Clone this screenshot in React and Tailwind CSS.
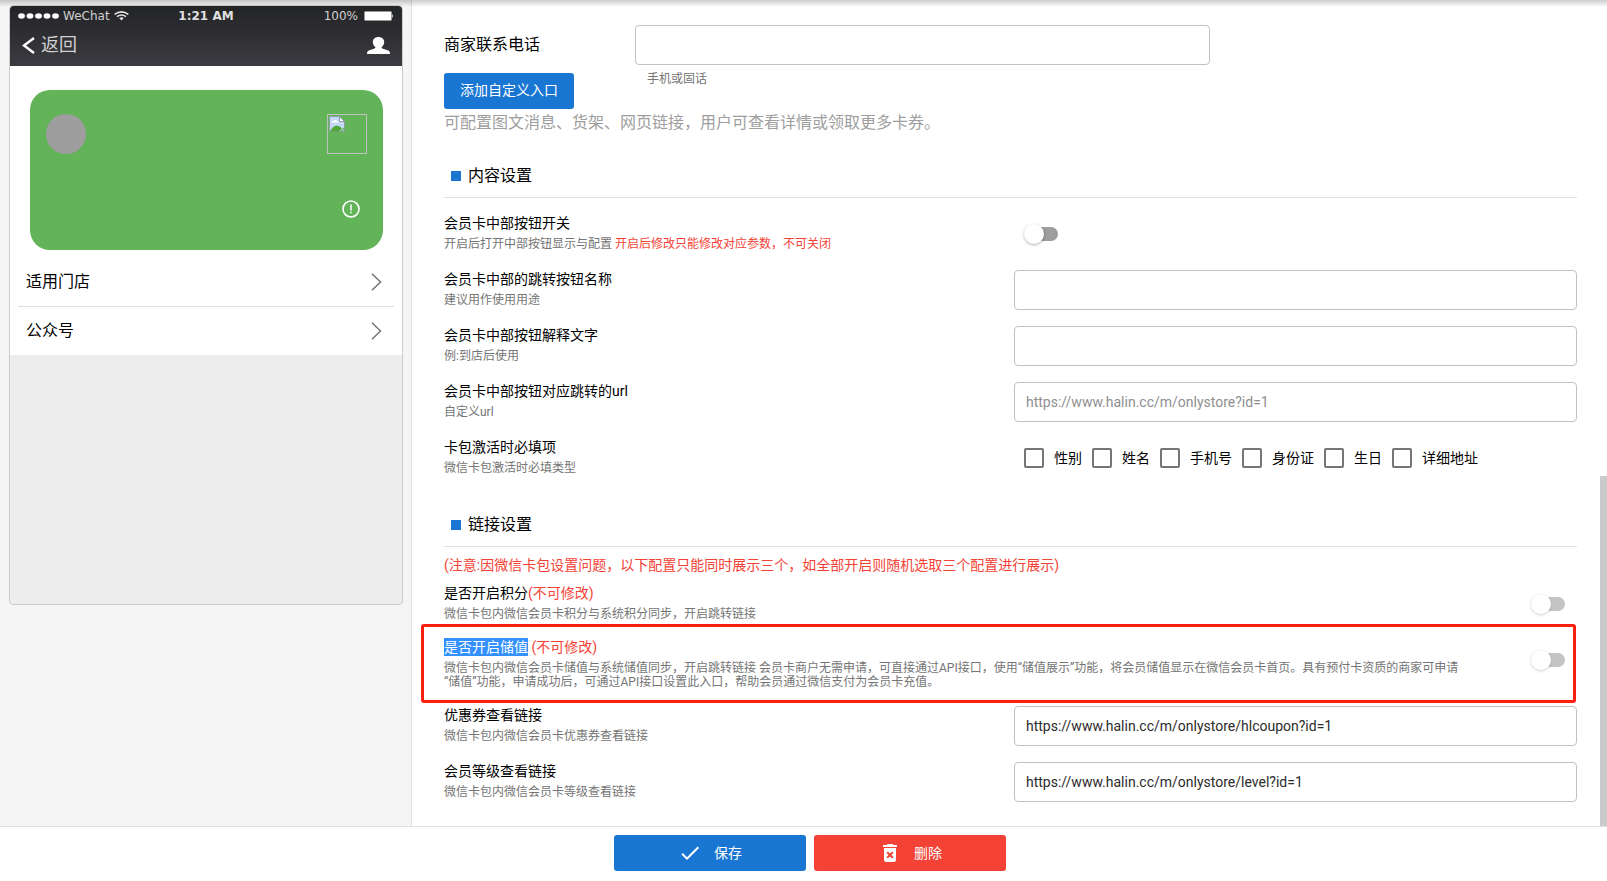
import React from "react";
import { MdCheck, MdDeleteForever } from "react-icons/md";

const inputClass =
  "block h-10 w-full rounded border border-[#c2c2c2] bg-white px-[11px] text-sm text-[#2b2b2b] outline-none placeholder:text-[#8f8f8f]";

function Toggle({ label, disabled }) {
  return (
    <label className={disabled ? "relative block h-5 w-[34px] opacity-60" : "relative block h-5 w-[34px]"}>
      <input type="checkbox" role="switch" aria-label={label} className="peer sr-only" disabled={disabled} />
      <span className="absolute top-[3px] right-0 left-[2px] h-3.5 rounded-full bg-[#9e9e9e]" />
      <span className="absolute top-0 left-0 size-5 rounded-full bg-white shadow-[0_1px_3px_rgba(0,0,0,0.3)]" />
    </label>
  );
}

function SectionTitle({ children }) {
  return (
    <h2 className="flex h-11 items-center gap-[7px] border-b border-[#e0e0e0] pl-[7px] text-base text-black">
      <span className="size-2.5 bg-[#1976d2]" />
      {children}
    </h2>
  );
}

function RowText({ label, htmlFor, children }) {
  const Tag = htmlFor ? "label" : "div";
  return (
    <div>
      <Tag htmlFor={htmlFor} className="block text-sm leading-[18px] text-black">
        {label}
      </Tag>
      <p className="mt-[5px] text-xs leading-3.5 text-[#757575]">{children}</p>
    </div>
  );
}

function FieldRow({ id, label, caption, ...input }) {
  return (
    <div className="grid grid-cols-2 gap-[7px] py-2">
      <RowText label={label} htmlFor={id}>
        {caption}
      </RowText>
      <input id={id} type="text" className={inputClass} {...input} />
    </div>
  );
}

function PhoneHeader() {
  return (
    <header className="h-[60px] rounded-t bg-linear-to-b from-[#232426] to-[#3c3b41] text-white">
      <div className="grid h-5 grid-cols-3 items-center pr-2 pl-2 font-['DejaVu_Sans',sans-serif] text-xs">
        <div className="flex items-center gap-1">
          <svg width="41" height="6" viewBox="0 0 41 6" fill="#fff" aria-hidden="true">
            <ellipse cx="3.5" cy="3" rx="3.4" ry="2.7" />
            <ellipse cx="12" cy="3" rx="3.4" ry="2.7" />
            <ellipse cx="20.5" cy="3" rx="3.4" ry="2.7" />
            <ellipse cx="29" cy="3" rx="3.4" ry="2.7" />
            <ellipse cx="37.5" cy="3" rx="3.4" ry="2.7" />
          </svg>
          <span className="text-[#d0d0d0]">WeChat</span>
          <svg width="15" height="10" viewBox="0 0 15 10" fill="none" stroke="#e6e6e6" strokeWidth="1.6" aria-hidden="true">
            <path d="M0.6 3.3Q7.5-1.6 14.4 3.3" />
            <path d="M3 5.7Q7.5 2.4 12 5.7" />
            <path d="M5.2 7L7.5 9.5L9.8 7Q7.5 5.6 5.2 7Z" fill="#e6e6e6" stroke="none" />
          </svg>
        </div>
        <div className="text-center font-bold text-[#e0e0e0]">1:21 AM</div>
        <div className="flex items-center justify-end gap-1.5">
          <span className="text-[#d0d0d0]">100%</span>
          <svg width="30" height="10" viewBox="0 0 30 10" aria-hidden="true">
            <rect x="0.5" y="0.5" width="27" height="9" rx="1" fill="#fff" stroke="#999" />
            <path d="M28 3Q30 5 28 7Z" fill="#ccc" />
          </svg>
        </div>
      </div>
      <div className="flex h-10 items-center justify-between px-3 pb-0.5">
        <a href="#back" className="flex items-center gap-1.5 text-lg text-[#d0d0d0]">
          <svg width="13" height="17" viewBox="0 0 13 17" fill="none" stroke="#fff" strokeWidth="2.4" aria-hidden="true">
            <path d="M12 1L2 8.5L12 16" />
          </svg>
          返回
        </a>
        <svg width="23" height="17" viewBox="0 0 23 17" fill="#fff" aria-hidden="true">
          <path d="M11.5 0C15 0 17.2 2.2 17.2 5.2C17.2 7.4 16 9 14.6 10C14.5 11 15 11.4 16 11.8L20.5 13.3C22.5 14 23 15 23 17H0C0 15 .5 14 2.5 13.3L7 11.8C8 11.4 8.5 11 8.4 10C7 9 5.8 7.4 5.8 5.2C5.8 2.2 8 0 11.5 0Z" />
        </svg>
      </div>
    </header>
  );
}

function PhoneLink({ children, last }) {
  return (
    <a
      href="#link"
      className={
        last
          ? "mx-2 flex h-12 items-center justify-between pr-3 pl-2 text-base text-black"
          : "mx-2 flex h-[49px] items-center justify-between border-b border-[#e0e0e0] pr-3 pl-2 text-base text-black"
      }
    >
      {children}
      <svg width="11" height="18" viewBox="0 0 11 18" fill="none" stroke="#757575" strokeWidth="1.5" aria-hidden="true">
        <path d="M1 0.8L9.5 9L1 17.2" />
      </svg>
    </a>
  );
}

function Phone() {
  return (
    <section className="flex h-[600px] flex-col rounded border border-[#cccccc] bg-[#ededed]">
      <PhoneHeader />
      <div className="bg-white pt-6">
        <div className="ml-5 mr-[19px] flex h-40 justify-between rounded-[20px] bg-[#63b359] px-4 py-6">
          <div className="size-10 rounded-full bg-[#9e9e9e]" />
          <div className="flex flex-col items-end justify-between pb-2">
            <div className="size-10 border border-[#c0c0c0] p-px">
              <svg width="16" height="16" viewBox="0 0 16 16" aria-hidden="true">
                <path d="M0.5 0.5H10.5L15.5 5.5V15.5H0.5Z" fill="#c5d9f7" stroke="#8f9aa8" />
                <path d="M2.5 6.5Q3 4.5 5 4.8Q6.5 3 8 5Q9.6 5 9.5 6.5Z" fill="#fff" />
                <path d="M1 15.5Q4 9.5 8 9.5Q11 9.8 13 12.5L10 15.5Z" fill="#4fa832" />
                <path d="M10.5 0.5V5.5H15.5Z" fill="#fff" stroke="#8f9aa8" />
                <path d="M10.5 16L16 10.5V12.5L12.5 16Z" fill="#63b359" />
              </svg>
            </div>
            <svg className="mr-[7px]" width="18" height="18" viewBox="0 0 18 18" fill="none" stroke="#fff" aria-hidden="true">
              <circle cx="9" cy="9" r="8" strokeWidth="1.6" />
              <path d="M9 4.5V10.5M9 11.8V13.3" strokeWidth="1.5" />
            </svg>
          </div>
        </div>
        <div className="pt-2">
          <PhoneLink>适用门店</PhoneLink>
          <PhoneLink last>公众号</PhoneLink>
        </div>
      </div>
    </section>
  );
}

const requiredFields = ["性别", "姓名", "手机号", "身份证", "生日", "详细地址"];

export default function App() {
  return (
    <div className="relative flex h-screen flex-col overflow-hidden bg-white font-[Roboto,'Noto_Sans_CJK_SC',sans-serif]">
      <div className="pointer-events-none absolute inset-x-0 top-0 z-10 h-[7px] bg-linear-to-b from-black/20 to-transparent" />
      <div className="flex min-h-0 flex-1 border-b border-[#e0e0e0]">
        <aside className="w-[412px] shrink-0 border-r border-[#e0e0e0] bg-[#f5f5f5] pt-[5px] pr-2 pl-[9px]">
          <Phone />
        </aside>

        <main className="min-w-0 flex-1 overflow-hidden pt-[25px] pr-[23px] pl-8">
          <div className="grid h-10 grid-cols-[191px_575px] items-center">
            <label htmlFor="tel" className="text-base text-black">
              商家联系电话
            </label>
            <input id="tel" type="tel" className={inputClass} />
          </div>
          <div className="flex items-start">
            <div className="w-[203px]">
              <button type="button" className="mt-2 h-9 rounded-[3px] bg-[#1976d2] px-4 pb-0.5 text-sm text-white">
                添加自定义入口
              </button>
            </div>
            <p className="mt-1.5 text-xs leading-4 text-[#757575]">手机或固话</p>
          </div>
          <p className="mt-0.5 text-base text-[#9e9e9e]">
            可配置图文消息、货架、网页链接，用户可查看详情或领取更多卡券。
          </p>

          <div className="mt-[19px]">
            <SectionTitle>内容设置</SectionTitle>
          </div>
          <div className="pt-2">
            <div className="grid grid-cols-2 gap-[7px] py-2">
              <RowText label="会员卡中部按钮开关">
                开启后打开中部按钮显示与配置{" "}
                <span className="text-[#f44336]">开启后修改只能修改对应参数，不可关闭</span>
              </RowText>
              <div className="flex h-10 items-center pl-2.5">
                <Toggle label="会员卡中部按钮开关" />
              </div>
            </div>
            <FieldRow id="btn-name" label="会员卡中部的跳转按钮名称" caption="建议用作使用用途" />
            <FieldRow id="btn-text" label="会员卡中部按钮解释文字" caption="例:到店后使用" />
            <FieldRow
              id="btn-url"
              label="会员卡中部按钮对应跳转的url"
              caption="自定义url"
              placeholder="https://www.halin.cc/m/onlystore?id=1"
            />
            <div className="grid grid-cols-2 gap-[7px] py-2">
              <RowText label="卡包激活时必填项">微信卡包激活时必填类型</RowText>
              <div className="flex h-10 items-center gap-2.5 pl-2.5">
                {requiredFields.map((name) => (
                  <label key={name} className="flex items-center gap-2.5 text-sm whitespace-nowrap text-black">
                    <input
                      type="checkbox"
                      className="size-5 appearance-none rounded-xs border-2 border-[#757575] bg-white checked:bg-[#1976d2]"
                    />
                    {name}
                  </label>
                ))}
              </div>
            </div>
          </div>

          <div className="mt-[17px]">
            <SectionTitle>链接设置</SectionTitle>
          </div>
          <p className="mt-2 text-sm leading-5 text-[#f44336]">
            (注意:因微信卡包设置问题，以下配置只能同时展示三个，如全部开启则随机选取三个配置进行展示)
          </p>
          <div className="flex h-[49px] items-start justify-between pt-[9px] pr-3">
            <RowText
              label={
                <>
                  是否开启积分<span className="text-[#f44336]">(不可修改)</span>
                </>
              }
            >
              微信卡包内微信会员卡积分与系统积分同步，开启跳转链接
            </RowText>
            <div className="flex h-10 items-center">
              <Toggle label="是否开启积分" disabled />
            </div>
          </div>
          <div className="mr-px -ml-[23px] flex items-start justify-between rounded-[3px] border-[3px] border-[#ff1e10] py-[11px] pr-2 pl-5">
            <div className="max-w-[1026px]">
              <RowText
                label={
                  <>
                    <span className="inline-block h-[18px] bg-[#3390ff] align-top leading-[18px] text-white">
                      是否开启储值
                    </span>{" "}
                    <span className="text-[#f44336]">(不可修改)</span>
                  </>
                }
              >
                微信卡包内微信会员卡储值与系统储值同步，开启跳转链接
                会员卡商户无需申请，可直接通过API接口，使用“储值展示”功能，将会员储值显示在微信会员卡首页。具有预付卡资质的商家可申请
                <wbr />
                “储值”功能，申请成功后，可通过API接口设置此入口，帮助会员通过微信支付为会员卡充值。
              </RowText>
            </div>
            <div className="flex h-11 items-center">
              <Toggle label="是否开启储值" disabled />
            </div>
          </div>
          <div className="-mt-[5px]">
            <FieldRow
              id="coupon-url"
              label="优惠券查看链接"
              caption="微信卡包内微信会员卡优惠券查看链接"
              defaultValue="https://www.halin.cc/m/onlystore/hlcoupon?id=1"
            />
            <FieldRow
              id="level-url"
              label="会员等级查看链接"
              caption="微信卡包内微信会员卡等级查看链接"
              defaultValue="https://www.halin.cc/m/onlystore/level?id=1"
            />
          </div>
        </main>
        <div className="flex w-[7px] shrink-0 flex-col justify-end">
          <div className="h-[350px] bg-[#cacaca]" />
        </div>
      </div>

      <footer className="flex h-[54px] shrink-0 items-start justify-center gap-2 pt-2 pl-[13px]">
        <button type="button" className="flex h-9 w-48 items-center justify-center gap-3 rounded-[3px] bg-[#1976d2] text-sm text-white">
          <MdCheck className="size-6" />
          保存
        </button>
        <button type="button" className="flex h-9 w-48 items-center justify-center gap-3 rounded-[3px] bg-[#f44336] text-sm text-white">
          <MdDeleteForever className="size-6" />
          删除
        </button>
      </footer>
    </div>
  );
}
